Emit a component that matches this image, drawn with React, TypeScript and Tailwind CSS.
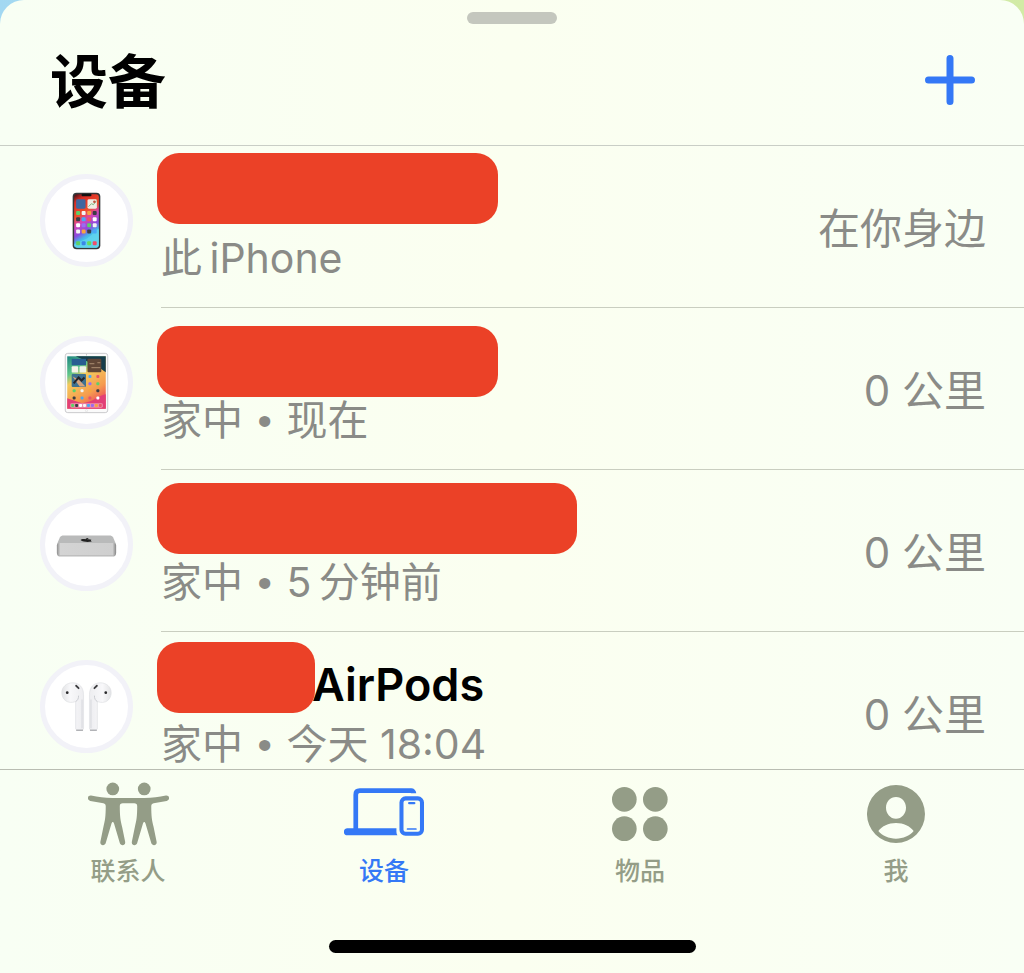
import React from 'react';

interface Device {
  id: string;
  title?: string;
  place: string;
  seen?: string;
  distance: string;
  mask: string;
  art: React.ReactNode;
}

const appColors = ['#5fd068', '#f4f4f4', '#f7a440', '#3c3c44', '#4aa8f5', '#e9546b', '#ffffff', '#9a6bf2'];

const PhoneArt = () => (
  <svg viewBox="0 0 84 84" className="w-full h-full" aria-hidden="true">
    <defs>
      <linearGradient id="phoneWall" x1="0" y1="0" x2="0.3" y2="1">
        <stop offset="0" stopColor="#3a0d14" />
        <stop offset="0.15" stopColor="#d92b25" />
        <stop offset="0.42" stopColor="#f0502c" />
        <stop offset="0.56" stopColor="#d546b8" />
        <stop offset="0.74" stopColor="#8a4be0" />
        <stop offset="0.86" stopColor="#45b8ea" />
        <stop offset="1" stopColor="#62d8ea" />
      </linearGradient>
    </defs>
    <rect x="28" y="14" width="28" height="57" rx="4" fill="#34383a" />
    <rect x="29.5" y="15.5" width="25" height="54" rx="3" fill="url(#phoneWall)" />
    <path d="M54.5 50c-6 4-8 9-16 12l-9 4v2l3 1.500h20l2-2z" fill="#5fd3ee" opacity="0.8" />
    <rect x="37" y="15" width="10" height="2.500" rx="1" fill="#111" />
    <rect x="31.500" y="20.500" width="9.500" height="9.500" rx="1.500" fill="#3f679f" />
    <rect x="43" y="20.500" width="9.500" height="9.500" rx="1.500" fill="#f1ede4" />
    <path d="M44 28l3-3 2 1 3-4" stroke="#7cb87d" fill="none" />
    <circle cx="50" cy="23" r="1.300" fill="#c0533e" />
    {[0, 1, 2, 3].map((r) =>
      [0, 1, 2, 3].map((c) => (
        <rect key={`${r}-${c}`} x={31.5 + c * 5.6} y={32.5 + r * 6.2} width="4" height="4" rx="1" fill={appColors[(r * 3 + c) % 8]} />
      ))
    )}
    {['#5fd068', '#3b86e8', '#65dc5e', '#f0506a'].map((color, i) => (
      <rect key={color} x={31.5 + i * 5.6} y="63" width="4" height="4" rx="1" fill={color} />
    ))}
  </svg>
);

const TabletArt = () => (
  <svg viewBox="0 0 84 84" className="w-full h-full" aria-hidden="true">
    <defs>
      <linearGradient id="padWall" x1="0" y1="0" x2="0.5" y2="1">
        <stop offset="0" stopColor="#1d8580" />
        <stop offset="0.3" stopColor="#61c68b" />
        <stop offset="0.45" stopColor="#f5c95c" />
        <stop offset="0.8" stopColor="#f59b4f" />
        <stop offset="1" stopColor="#ee5a57" />
      </linearGradient>
    </defs>
    <rect x="20.500" y="12.500" width="43" height="60" rx="2.500" fill="#fafafa" stroke="#c9c9cc" />
    <rect x="22.500" y="15.500" width="39" height="53" fill="url(#padWall)" />
    <path d="M31 15.500h30.500v16l-10-7z" fill="#173e4c" />
    <path d="M61.500 54c-8 1-12 8-24 9l-15-5v10.500h39z" fill="#e23f77" />
    <rect x="27" y="18" width="14.500" height="6.500" fill="#285d91" />
    <rect x="43" y="18" width="14" height="13.500" rx="1" fill="#604636" />
    <path d="M45 23h5m3-1h3m-9 5h9" stroke="#ad8f73" />
    <rect x="27" y="25.500" width="6.500" height="6.500" rx="1" fill="#f6f3e9" />
    <rect x="35" y="25.500" width="6.500" height="6.500" rx="1" fill="#edf2e6" />
    <rect x="27" y="33.500" width="14.500" height="13" rx="1" fill="#3e7190" />
    <path d="M28 36l6 3 7 7h-6z" fill="#d6a37d" />
    <path d="M29 43l5-6 3 3 3-3" stroke="#26262b" strokeWidth="2" fill="none" />
    {[0, 1, 2, 3].map((r) =>
      [0, 1, 2, 3].map((c) =>
        r < 2 && c < 2 ? null : (
          <rect key={`${r}-${c}`} x={28 + c * 8} y={34.5 + r * 7.2} width="3" height="3" rx="1" fill={appColors[(r * 3 + c + 2) % 8]} />
        )
      )
    )}
    <rect x="25.500" y="63" width="33" height="4.500" rx="1.500" fill="#f0a5b9" opacity="0.8" />
    {[0, 1, 2, 3, 4, 5, 6, 7].map((i) => (
      <rect key={i} x={26.5 + i * 4} y="63.700" width="3" height="3" rx="0.800" fill={appColors[(i * 3) % 8]} />
    ))}
    <circle cx="42" cy="14" r="0.600" fill="#aaa" />
    <circle cx="42" cy="70.500" r="1.100" fill="none" stroke="#d5d5d5" strokeWidth="0.500" />
  </svg>
);

const MiniArt = () => (
  <svg viewBox="0 0 84 84" className="w-full h-full" aria-hidden="true">
    <defs>
      <linearGradient id="miniFront" x1="0" x2="1">
        <stop offset="0" stopColor="#8d8d8d" />
        <stop offset="0.06" stopColor="#d4d4d4" />
        <stop offset="0.94" stopColor="#cfcfcf" />
        <stop offset="1" stopColor="#858585" />
      </linearGradient>
    </defs>
    <path d="M19 33h46c2 0 3 .5 4 2l3 7H12l3-7c1-1.500 2-2 4-2z" fill="#b9baba" />
    <path d="M12 43c0-2 1.500-2.500 4-2.500h52c2.500 0 4 .5 4 2.500v7c0 2.500-1 4-3 4H15c-2 0-3-1.500-3-4v-7z" fill="url(#miniFront)" />
    <path d="M14 53.500h56" stroke="#b3b3b3" />
    <path d="M36 37.500c1-1.200 3-1.300 5-.8 0-.7 2-1.200 3-1.200 0 .6-.8 1-1.500 1.200 2-.3 3.500-.1 4.500.6-1 .7-.5 1.200.5 1.500-2 1-9 1-11.500-1.300z" fill="#222" />
  </svg>
);

const Bud = () => (
  <g>
    <path d="M17 28c0-6 5-10 11-10 7 0 11 5 11 12v34c0 1.500-1 2-4 2s-4-.5-4-2V37c-8 3-14-2-14-9z" fill="url(#budFill)" stroke="#dcdde0" strokeWidth="0.600" />
    <path d="M31 37c2-1 3-3 3-6" fill="none" stroke="#c9cbd0" />
    <path d="M37.500 35v29" stroke="#dedfe3" strokeWidth="1.500" />
    <circle cx="22.500" cy="28" r="1.400" fill="#2b2b2d" />
    <path d="M31.500 21l2.500 2.500" stroke="#3c3c3f" strokeWidth="1.800" strokeLinecap="round" />
    <path d="M31.500 66h7" stroke="#96979b" strokeWidth="1" />
  </g>
);

const BudsArt = () => (
  <svg viewBox="0 0 84 84" className="w-full h-full" aria-hidden="true">
    <defs>
      <linearGradient id="budFill" x1="0" x2="1">
        <stop offset="0" stopColor="#e3e4e6" />
        <stop offset="0.4" stopColor="#f8f8fa" />
        <stop offset="1" stopColor="#ededf0" />
      </linearGradient>
    </defs>
    <Bud />
    <g transform="translate(84 0) scale(-1 1)">
      <Bud />
    </g>
  </svg>
);

// \u2009 is the thin gap between Chinese and Latin text
const devices: Device[] = [
  { id: 'iphone', place: '此\u2009iPhone', distance: '在你身边', mask: 'top-[7px] w-[341px]', art: <PhoneArt /> },
  { id: 'ipad', place: '家中', seen: '现在', distance: '0 公里', mask: 'top-[18px] w-[341px]', art: <TabletArt /> },
  { id: 'mac-mini', place: '家中', seen: '5\u2009分钟前', distance: '0 公里', mask: 'top-[13px] w-[420px]', art: <MiniArt /> },
  { id: 'airpods', title: 'AirPods', place: '家中', seen: '今天 18:04', distance: '0 公里', mask: 'top-[10px] w-[158px]', art: <BudsArt /> },
];

const PeopleIcon = () => (
  <svg viewBox="84 53 242 190" className="w-[81px] h-16" fill="currentColor" aria-hidden="true">
    <circle cx="158" cy="73" r="19" />
    <circle cx="252" cy="73" r="19" />
    <path d="M93 93c22 4 40 7 64 7h96c24 0 42-3 64-7 11-1 13 13 2 16l-39 7c-5 1-7 4-7 9 0 30 2 42 7 62l9 44c2 12-13 14-16 4l-17-58c-2-7-6-7-8 0l-17 58c-3 10-18 8-16-4l9-44c5-20 7-32 7-62 0-7-3-9-9-9h-34c-6 0-9 2-9 9 0 30 2 42 7 62l9 44c2 12-13 14-16 4l-17-58c-2-7-6-7-8 0l-17 58c-3 10-18 8-16-4l9-44c5-20 7-32 7-62 0-5-2-8-7-9l-39-7c-11-3-9-17 2-16z" />
  </svg>
);

const DevicesIcon = () => (
  <svg viewBox="75 73 238 141" className="w-20 h-12 mb-1" fill="none" stroke="currentColor" aria-hidden="true">
    <path d="M110 197V92c0-8 4-12 12-12h153" strokeWidth="14" />
    <path d="M274 73c10 0 15 6 16 15h-16z" fill="currentColor" stroke="none" />
    <path d="M85 192h146v11c0 4 1 7 3 10H85c-14 0-14-21 0-21z" fill="currentColor" stroke="none" />
    <rect x="246" y="103" width="61" height="105" rx="12" strokeWidth="12" />
    <path d="M269 117h15" strokeWidth="7" strokeLinecap="round" />
    <path d="M264 194h25" strokeWidth="5" strokeLinecap="round" />
  </svg>
);

const ItemsIcon = () => (
  <svg viewBox="99 66 168 162" className="w-14 h-[54px]" fill="currentColor" aria-hidden="true">
    <circle cx="136" cy="103" r="37" />
    <circle cx="229" cy="103" r="37" />
    <circle cx="136" cy="191" r="37" />
    <circle cx="229" cy="191" r="37" />
  </svg>
);

const MeIcon = () => (
  <svg viewBox="114 60 174 174" className="w-[58px] h-[58px]" fill="currentColor" aria-hidden="true">
    <path
      fillRule="evenodd"
      d="M201 60a87 87 0 1 0 0 174 87 87 0 0 0 0-174zm0 36c17 0 30 14 30 32s-13 33-30 33-30-15-30-33 13-32 30-32zm-53 102c11-15 30-24 53-24s42 9 53 24c-12 14-31 23-53 23s-41-9-53-23z"
    />
  </svg>
);

const tabs = [
  { id: 'people', label: '联系人', icon: <PeopleIcon /> },
  { id: 'devices', label: '设备', icon: <DevicesIcon /> },
  { id: 'items', label: '物品', icon: <ItemsIcon /> },
  { id: 'me', label: '我', icon: <MeIcon /> },
];

const DeviceRow: React.FC<{ device: Device }> = ({ device }) => (
  <li className="relative flex shrink-0 pl-10">
    <div className="mt-7 mr-7 w-[93px] h-[93px] shrink-0 rounded-full border-5 border-[#f2f2f8] bg-white">
      {device.art}
    </div>
    <div className="flex flex-1 items-center justify-between border-b border-[#c9cec0] py-6 pr-[38px]">
      <div>
        <h2 className="h-[58px] pl-[151px] text-[45px] leading-[58px] font-semibold text-black">{device.title}</h2>
        <p className="mt-[5px] h-[50px] text-[41px] leading-[50px] text-[#8a8b87]">
          {device.place}
          {device.seen && (
            <>
              {' '}
              <span className="px-[3px] font-['Liberation_Sans'] leading-none">•</span> {device.seen}
            </>
          )}
        </p>
      </div>
      <span className="pt-1 text-[42px] leading-[60px] text-[#8a8b87]">{device.distance}</span>
    </div>
    <span className={`absolute left-[157px] h-[71px] rounded-[22px] bg-[#eb4127] ${device.mask}`} aria-hidden="true" />
  </li>
);

const App: React.FC = () => {
  const [activeTab, setActiveTab] = React.useState('devices');

  return (
    <div className="h-screen bg-linear-to-r from-[#a2d8f2] to-[#d2eba5] font-[Inter,'Noto_Sans_CJK_SC',sans-serif]">
      <main className="flex h-full flex-col overflow-hidden rounded-t-[24px] bg-linear-to-r from-[#f8fff4] via-[#fbfff0] to-[#f9fff5]">
        <header className="shrink-0 border-b border-[#c9cec6] pt-3">
          <div className="mx-auto h-3 w-[90px] rounded-full bg-[#c4c7be]" />
          <div className="flex items-center justify-between pt-4 pb-[25px] pl-[50px] pr-[49px]">
            <h1 className="pt-1 text-[58px] leading-[76px] font-bold text-black">设备</h1>
            <button type="button" aria-label="添加" className="text-[#3478f6]">
              <svg viewBox="0 0 50 50" className="w-[50px] h-[50px]" fill="none" stroke="currentColor" strokeWidth="7" strokeLinecap="round">
                <path d="M25 3.500v43M3.500 25h43" />
              </svg>
            </button>
          </div>
        </header>

        <ul className="flex min-h-0 flex-1 flex-col overflow-hidden">
          {devices.map((device) => (
            <DeviceRow key={device.id} device={device} />
          ))}
        </ul>

        <nav className="shrink-0 border-t border-[#b9bdb2] pt-3 pb-5">
          <div className="grid grid-cols-4">
            {tabs.map((tab) => (
              <button
                key={tab.id}
                type="button"
                onClick={() => setActiveTab(tab.id)}
                className={`flex flex-col items-center gap-2 ${activeTab === tab.id ? 'text-[#3478f6]' : 'text-[#949d87]'}`}
              >
                <span className="flex h-16 items-center">{tab.icon}</span>
                <span className="text-[25px] leading-[34px] font-medium">{tab.label}</span>
              </button>
            ))}
          </div>
          <div className="mx-auto mt-[52px] h-[13px] w-[367px] rounded-full bg-black" />
        </nav>
      </main>
    </div>
  );
};

export default App;
